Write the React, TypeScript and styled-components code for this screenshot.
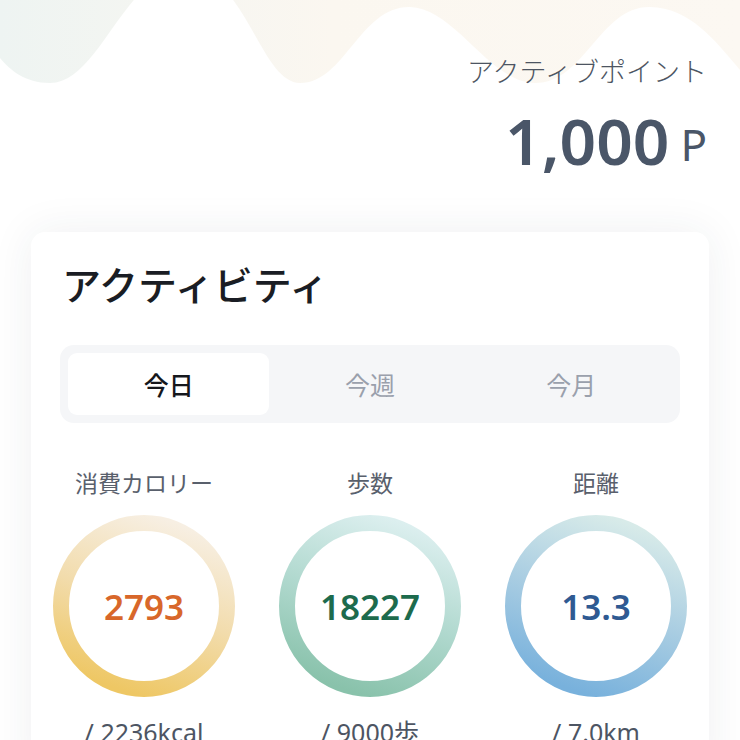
import styled, { createGlobalStyle } from 'styled-components';

const GlobalStyle = createGlobalStyle`
  html, body {
    margin: 0;
    padding: 0;
    background: #fff;
  }
  body {
    font-family: "Noto Sans", "Noto Sans CJK JP", sans-serif;
    color: #1b1e25;
  }
`;

const Page = styled.div`
  width: 740px;
  height: 740px;
  overflow: hidden;
  background: #fff;
`;

const Header = styled.header`
  position: relative;
  padding: 57px 33px 0;
  text-align: right;
`;

const Waves = styled.svg`
  position: absolute;
  top: 0;
  left: 0;
  z-index: 0;
`;

const PointLabel = styled.div`
  position: relative;
  font-size: 27px;
  line-height: 30px;
  font-weight: 300;
  color: #4d5562;
`;

const PointValue = styled.div`
  position: relative;
  display: flex;
  justify-content: flex-end;
  align-items: baseline;
  margin-top: 18px;
  color: #4a5668;
`;

const Amount = styled.span`
  font-size: 64px;
  line-height: 72px;
  font-weight: 600;
`;

const Unit = styled.span`
  font-size: 44px;
  font-weight: 400;
  margin-left: 11px;
  position: relative;
  top: -4px;
`;

const Card = styled.section`
  margin: 54px 31px 0;
  background: #fff;
  border-radius: 14px;
  box-shadow: 0 0 44px rgba(40, 50, 70, 0.075);
  padding: 30px 0 40px;
`;

const CardInner = styled.div`
  padding: 0 29px;
`;

const Title = styled.h2`
  margin: 0 0 0 2px;
  font-size: 39px;
  line-height: 46px;
  font-weight: 500;
  color: #1a1d24;
`;

const Tabs = styled.div`
  margin-top: 37px;
  display: grid;
  grid-template-columns: repeat(3, 1fr);
  padding: 8px;
  background: #f5f6f8;
  border-radius: 14px;
`;

const Tab = styled.div<{ $active?: boolean }>`
  height: 62px;
  display: flex;
  align-items: center;
  justify-content: center;
  border-radius: 9px;
  font-size: 25px;
  font-weight: ${(p) => (p.$active ? 500 : 400)};
  color: ${(p) => (p.$active ? '#15171c' : '#9aa0ac')};
  background: ${(p) => (p.$active ? '#fff' : 'transparent')};
`;

const Stats = styled.div`
  margin-top: 45px;
  display: grid;
  grid-template-columns: repeat(3, 1fr);
`;

const Stat = styled.div`
  display: flex;
  flex-direction: column;
  align-items: center;
`;

const StatLabel = styled.div`
  font-size: 23px;
  line-height: 30px;
  color: #59606c;
`;

const Ring = styled.div`
  position: relative;
  width: 182px;
  height: 182px;
  margin-top: 17px;
  display: flex;
  align-items: center;
  justify-content: center;

  svg {
    position: absolute;
    inset: 0;
  }
`;

const StatValue = styled.span<{ $color: string }>`
  position: relative;
  font-size: 35px;
  font-weight: 600;
  color: ${(p) => p.$color};
`;

const Goal = styled.div`
  margin-top: 19px;
  font-size: 25px;
  line-height: 32px;
  color: #4d5563;
`;

const stats = [
  { label: '消費カロリー', value: '2793', goal: '/ 2236kcal', color: '#d8672a', stops: ['#f7efe3', '#f2dcac', '#eec764'] },
  { label: '歩数', value: '18227', goal: '/ 9000歩', color: '#1d6b4d', stops: ['#dcefef', '#b1d9cf', '#89c2ab'] },
  { label: '距離', value: '13.3', goal: '/ 7.0km', color: '#2f5a92', stops: ['#d8ebe9', '#a9cde2', '#78b1dc'] },
];

function RingArt({ id, stops }: { id: string; stops: string[] }) {
  return (
    <svg width="182" height="182" viewBox="0 0 182 182">
      <defs>
        <linearGradient id={id} x1="0.7" y1="0" x2="0.35" y2="1">
          <stop offset="0" stopColor={stops[0]} />
          <stop offset="0.5" stopColor={stops[1]} />
          <stop offset="1" stopColor={stops[2]} />
        </linearGradient>
      </defs>
      <circle cx="91" cy="91" r="83" fill="none" stroke={`url(#${id})`} strokeWidth="16" />
    </svg>
  );
}

export default function App() {
  return (
    <>
      <GlobalStyle />
      <Page>
        <Header>
          <Waves width="740" height="100" viewBox="0 0 740 100">
            <defs>
              <linearGradient id="wave" x1="0" y1="0" x2="1" y2="0">
                <stop offset="0" stopColor="#eef4f2" />
                <stop offset="0.3" stopColor="#f7f6f1" />
                <stop offset="0.45" stopColor="#fbf7f0" />
                <stop offset="1" stopColor="#fcf8f2" />
              </linearGradient>
            </defs>
            <path
              d="M0 0 H740 V70 C715 40 690 8 650 7 C600 6 585 83 535 83 C490 83 455 8 410 7 C360 6 345 83 300 83 C260 83 245 -30 185 -30 C125 -30 100 83 50 83 C25 83 10 70 0 58 Z"
              fill="url(#wave)"
            />
          </Waves>
          <PointLabel>アクティブポイント</PointLabel>
          <PointValue>
            <Amount>1,000</Amount>
            <Unit>P</Unit>
          </PointValue>
        </Header>
        <Card>
          <CardInner>
            <Title>アクティビティ</Title>
            <Tabs>
              <Tab $active>今日</Tab>
              <Tab>今週</Tab>
              <Tab>今月</Tab>
            </Tabs>
          </CardInner>
          <Stats>
            {stats.map((s, i) => (
              <Stat key={s.label}>
                <StatLabel>{s.label}</StatLabel>
                <Ring>
                  <RingArt id={`ring${i}`} stops={s.stops} />
                  <StatValue $color={s.color}>{s.value}</StatValue>
                </Ring>
                <Goal>{s.goal}</Goal>
              </Stat>
            ))}
          </Stats>
        </Card>
      </Page>
    </>
  );
}
